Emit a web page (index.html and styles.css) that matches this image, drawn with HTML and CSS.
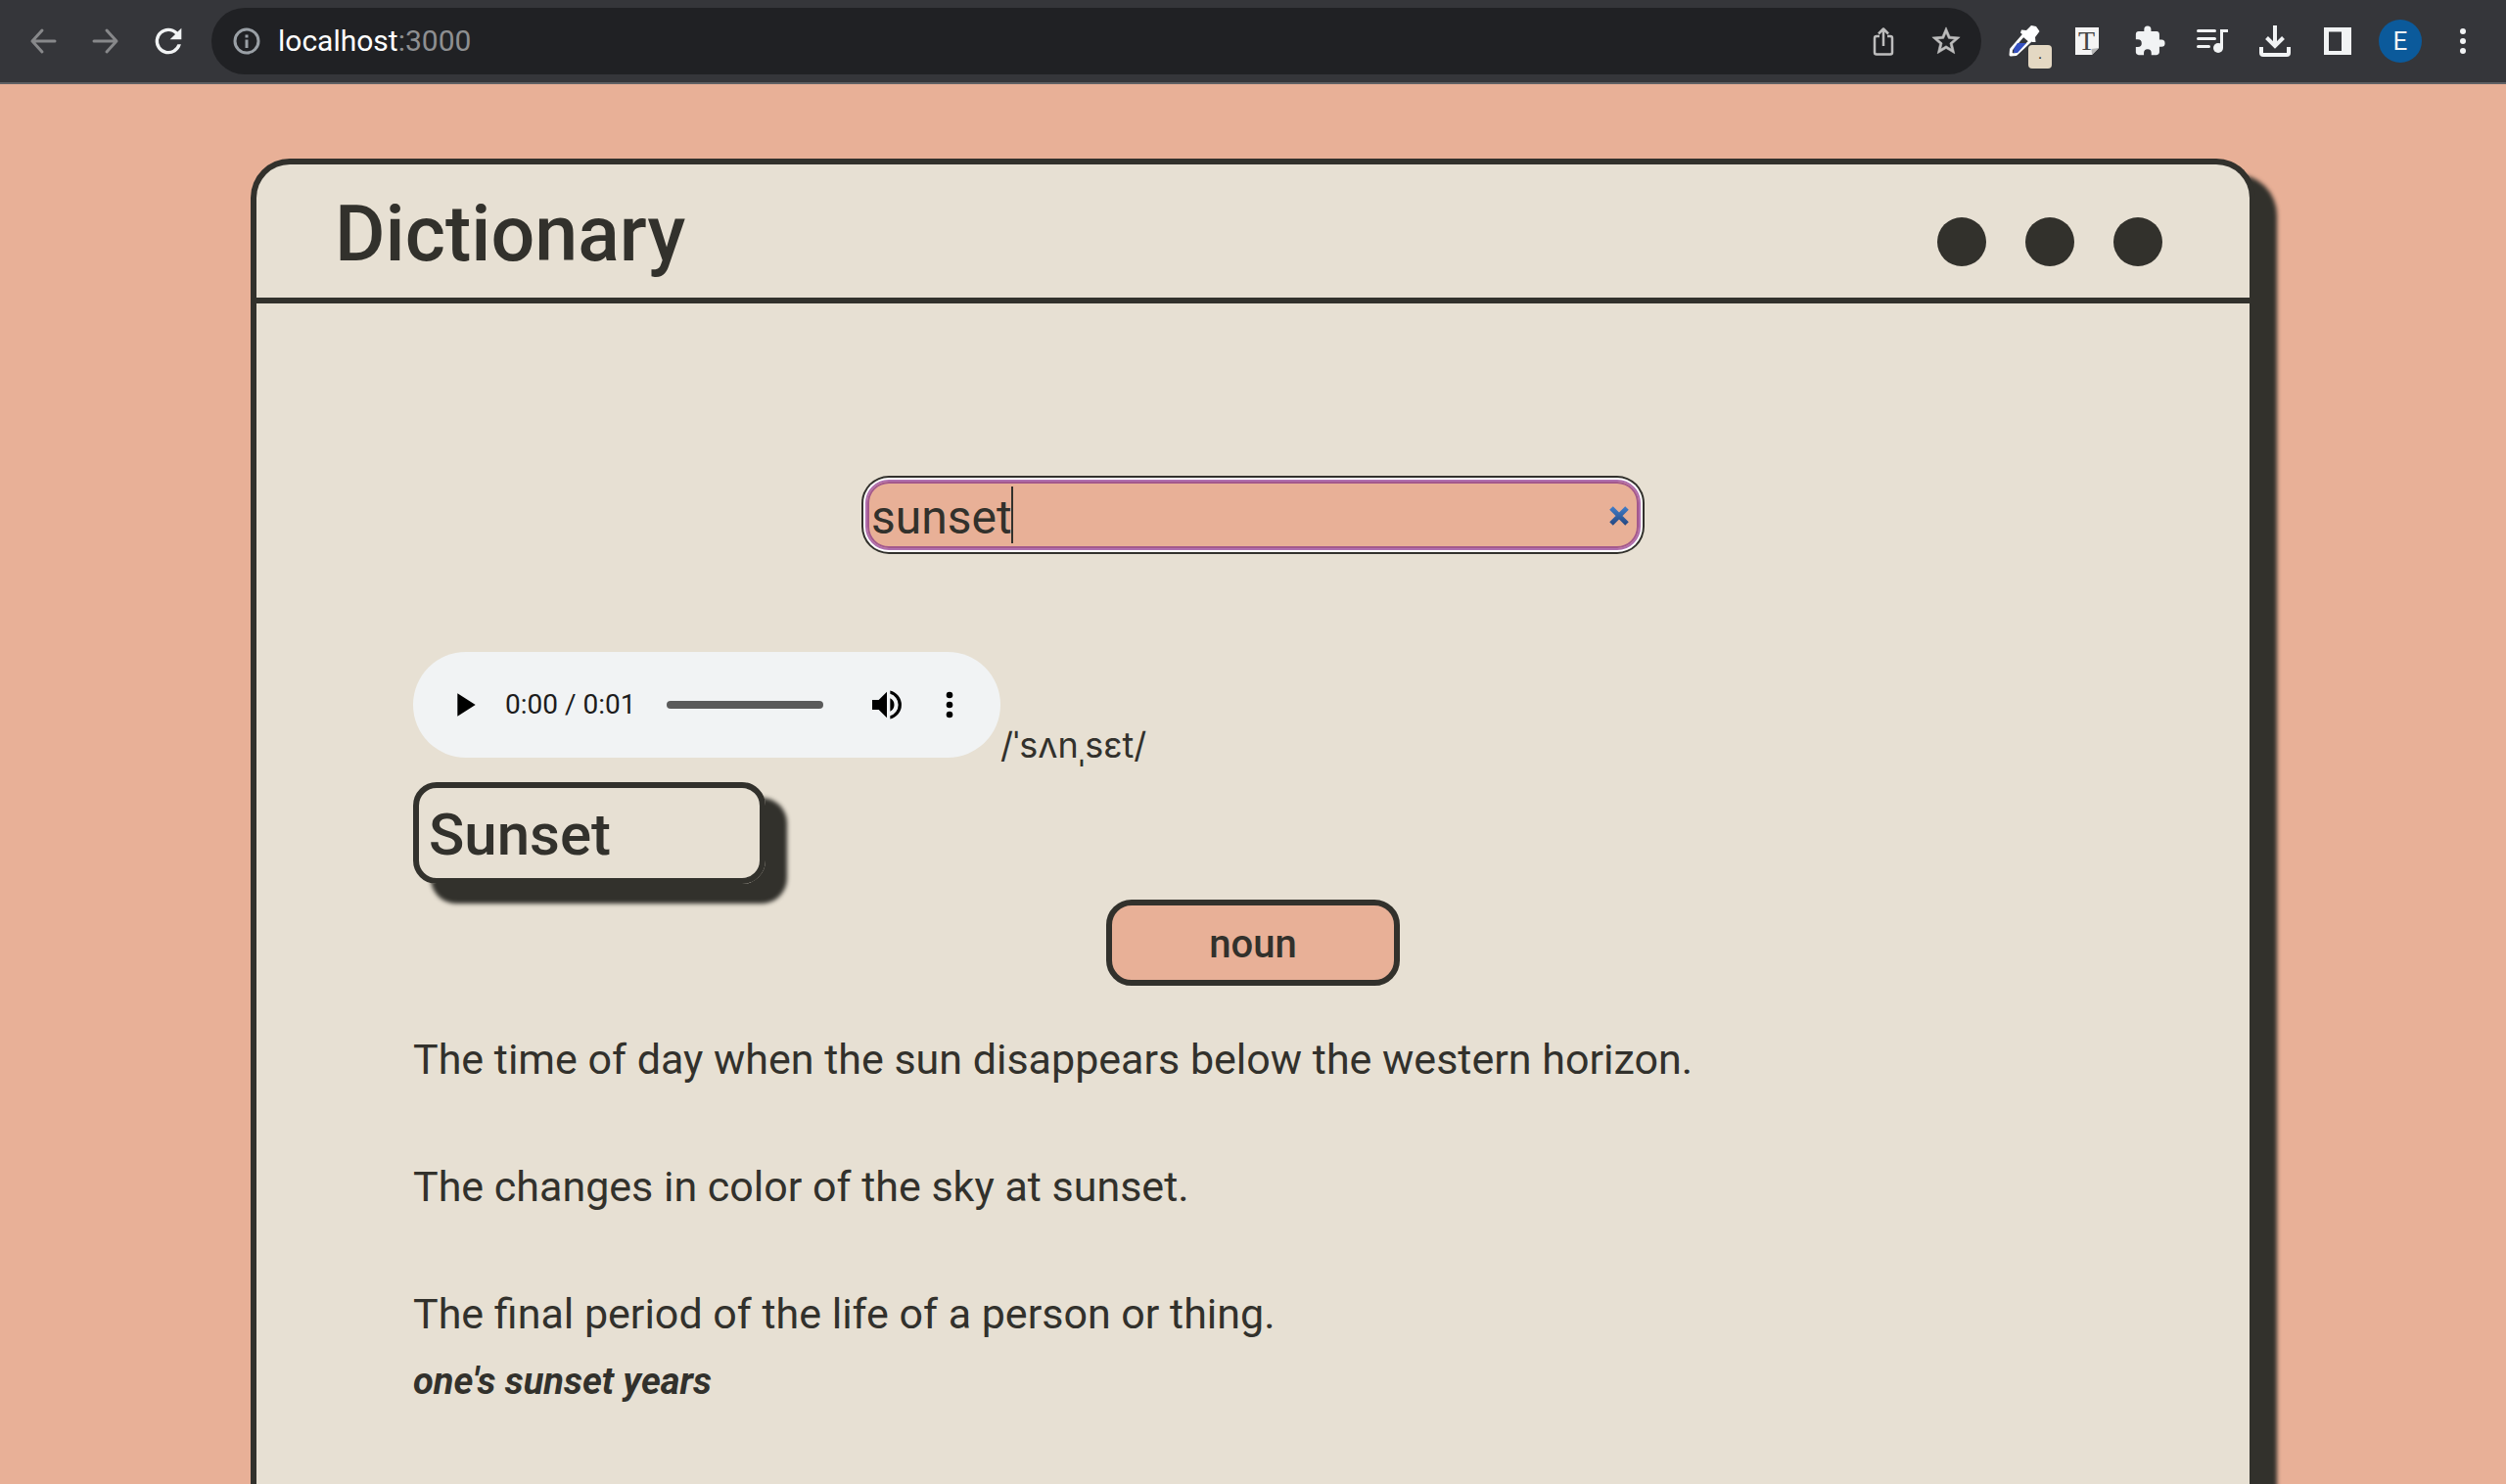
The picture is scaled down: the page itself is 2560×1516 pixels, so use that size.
FILE: index.html
```html
<!DOCTYPE html>
<html lang="en">
<head>
<meta charset="utf-8">
<meta name="viewport" content="width=device-width, initial-scale=1">
<title>Dictionary</title>
<link rel="stylesheet" href="styles.css">
</head>
<body>
<header class="toolbar">
  <nav class="toolbar-group" aria-label="Navigation">
    <button class="tool tool-muted" type="button" aria-label="Back">
      <svg class="icon" viewBox="0 0 40 40" fill="none" stroke="currentColor" stroke-width="3" stroke-linecap="round" stroke-linejoin="round"><path d="M32 20H9M19 9L9 20l10 11"/></svg>
    </button>
    <button class="tool tool-muted" type="button" aria-label="Forward">
      <svg class="icon" viewBox="0 0 40 40" fill="none" stroke="currentColor" stroke-width="3" stroke-linecap="round" stroke-linejoin="round"><path d="M8 20h23M21 9l10 11-10 11"/></svg>
    </button>
    <button class="tool" type="button" aria-label="Reload">
      <svg class="icon" viewBox="0 0 24 24" fill="currentColor"><path d="M17.65 6.35A7.95 7.95 0 0 0 12 4a8 8 0 1 0 7.73 10h-2.08A6 6 0 1 1 12 6c1.66 0 3.14.69 4.22 1.78L13 11h7V4l-2.35 2.35z"/></svg>
    </button>
  </nav>
  <div class="omnibox">
    <svg class="icon info" viewBox="0 0 40 40" fill="none" stroke="currentColor" stroke-width="3"><circle cx="20" cy="20" r="12"/><path d="M20 13.500v3M20 18.500v8.500"/></svg>
    <a class="url" href="#">localhost<span class="port">:3000</span></a>
    <button class="tool tool-soft" type="button" aria-label="Share">
      <svg class="icon" viewBox="0 0 40 40" fill="none" stroke="currentColor" stroke-width="2.500" stroke-linejoin="round"><path d="M16 15h-3a2 2 0 0 0-2 2v14.500a2 2 0 0 0 2 2h14a2 2 0 0 0 2-2V17a2 2 0 0 0-2-2h-3M20 25V8M15 12.500L20 7.500l5 5"/></svg>
    </button>
    <button class="tool tool-soft" type="button" aria-label="Bookmark">
      <svg class="icon icon-small" viewBox="0 0 24 24" fill="currentColor" stroke="currentColor" stroke-width=".4"><path d="M22 9.240l-7.190-.620L12 2 9.190 8.630 2 9.240l5.460 4.730L5.820 21 12 17.270 18.180 21l-1.630-7.030L22 9.240zM12 15.400l-3.760 2.270 1-4.280-3.320-2.880 4.380-.380L12 6.100l1.710 4.040 4.380.380-3.320 2.880 1 4.280L12 15.400z"/></svg>
    </button>
  </div>
  <div class="toolbar-group">
    <button class="tool" type="button" aria-label="Color picker">
      <svg class="icon" viewBox="0 0 40 40"><path d="M19 14L6.500 28.500 6 34l5.500-.500L26 20z" fill="#35363a" stroke="#fff" stroke-width="3" stroke-linejoin="round"/><path d="M13 22h9l-9 10H9l.5-5z" fill="#3550c0"/><path d="M17 8.500l5 .5 5-5 5 1 3.500 5-4.500 6 .5 5-3.500 0L16 11.500z" fill="#fff"/></svg>
      <span class="badge">.</span>
    </button>
    <button class="tool" type="button" aria-label="Type inspector">
      <svg class="icon" viewBox="0 0 40 40"><path d="M8 6h24v21l-7 7H8z" fill="#f4f4f4"/><path d="M32 27l-7 7-.5-6z" fill="#b5b5b5"/><text class="glyph" x="19.500" y="28.500" text-anchor="middle">T</text></svg>
    </button>
    <button class="tool" type="button" aria-label="Extensions">
      <svg class="icon icon-small" viewBox="0 0 24 24" fill="currentColor"><path d="M20.500 11H19V7c0-1.100-.9-2-2-2h-4V3.500a2.500 2.500 0 0 0-5 0V5H4c-1.100 0-1.990.9-1.990 2v3.800H3.500a2.700 2.700 0 0 1 0 5.400H2V20c0 1.100.9 2 2 2h3.800v-1.500a2.700 2.700 0 0 1 5.400 0V22H17c1.100 0 2-.9 2-2v-4h1.500a2.500 2.500 0 0 0 0-5z"/></svg>
    </button>
    <button class="tool" type="button" aria-label="Media controls">
      <svg class="icon" viewBox="0 0 40 40" fill="none" stroke="currentColor" stroke-width="3" stroke-linecap="round"><path d="M5.500 9.500h17M5.500 17.500h17M5.500 25.500h11"/><path d="M36 9.500h-6.500V27" stroke-linecap="butt"/><circle cx="26" cy="27" r="5" fill="currentColor" stroke="none"/></svg>
    </button>
    <button class="tool" type="button" aria-label="Downloads">
      <svg class="icon" viewBox="0 0 40 40" fill="none" stroke="currentColor" stroke-width="4"><path d="M20 4v21M11.500 16.500L20 25l8.500-8.500M6 26v6a2 2 0 0 0 2 2h24a2 2 0 0 0 2-2v-6"/></svg>
    </button>
    <button class="tool" type="button" aria-label="Side panel">
      <svg class="icon" viewBox="0 0 40 40" fill="currentColor" fill-rule="evenodd"><path d="M6 6h28v28H6zM11 10.500v19.500h13V10.500z"/></svg>
    </button>
    <button class="tool" type="button" aria-label="Profile"><span class="avatar">E</span></button>
    <button class="tool" type="button" aria-label="Menu">
      <svg class="icon" viewBox="0 0 40 40" fill="currentColor"><circle cx="20" cy="10" r="3"/><circle cx="20" cy="20" r="3"/><circle cx="20" cy="30" r="3"/></svg>
    </button>
  </div>
</header>

<div class="page">
  <div class="window">
    <header class="titlebar">
      <h1 class="title">Dictionary</h1>
      <div class="dots"><span class="dot"></span><span class="dot"></span><span class="dot"></span></div>
    </header>
    <main class="content">
      <form class="search">
        <input class="search-input" type="text" value="sunset" aria-label="Search for a word">
        <span class="caret"></span>
        <button class="clear" type="button" aria-label="Clear">
          <svg class="clear-icon" viewBox="0 0 24 24"><defs><linearGradient id="clear-blue" gradientUnits="userSpaceOnUse" x1="0" y1="2" x2="0" y2="22"><stop offset="0" stop-color="#427fcb"/><stop offset="1" stop-color="#24457f"/></linearGradient></defs><path d="M4 4l16 16M20 4L4 20" stroke="url(#clear-blue)" stroke-width="5" fill="none"/></svg>
        </button>
      </form>

      <div class="pronunciation">
        <div class="player">
          <button class="player-button" type="button" aria-label="Play"><svg class="icon" viewBox="0 0 24 24"><path d="M8 5v14l11-7z"/></svg></button>
          <span class="time">0:00 / 0:01</span>
          <input class="track" type="range" min="0" max="1" value="0" aria-label="Position">
          <button class="player-button" type="button" aria-label="Mute"><svg class="icon" viewBox="0 0 24 24"><path d="M3 9v6h4l5 5V4L7 9H3zm13.500 3A4.500 4.500 0 0 0 14 7.970v8.050A4.470 4.470 0 0 0 16.500 12zM14 3.230v2.060a7.010 7.010 0 0 1 0 13.420v2.060a9.010 9.010 0 0 0 0-17.540z"/></svg></button>
          <button class="player-button more" type="button" aria-label="More options"><svg class="icon" viewBox="0 0 24 24"><path d="M12 8a2 2 0 1 0 0-4 2 2 0 0 0 0 4zm0 2a2 2 0 1 0 0 4 2 2 0 0 0 0-4zm0 6a2 2 0 1 0 0 4 2 2 0 0 0 0-4z"/></svg></button>
        </div>
        <span class="phonetic">/ˈsʌnˌsɛt/</span>
      </div>

      <h2 class="word">Sunset</h2>
      <h3 class="part">noun</h3>

      <ul class="definitions">
        <li>The time of day when the sun disappears below the western horizon.</li>
        <li>The changes in color of the sky at sunset.</li>
        <li>The final period of the life of a person or thing.
          <p class="example">one's sunset years</p>
        </li>
      </ul>
    </main>
  </div>
</div>
</body>
</html>
```

FILE: styles.css
```css
:root {
  --ink: #32312c;
  --paper: #e7e0d3;
  --peach: #e8b097;
}

* { box-sizing: border-box; }

body {
  margin: 0;
  display: flex;
  flex-direction: column;
  min-height: 100vh;
  overflow-x: hidden;
  background: var(--peach);
  color: var(--ink);
  font-family: Roboto, "Liberation Sans", sans-serif;
}

button {
  padding: 0;
  border: 0;
  background: none;
  font: inherit;
  color: inherit;
}

svg { display: block; }

/* Browser toolbar */
.toolbar {
  display: flex;
  flex: none;
  align-items: center;
  gap: 12px;
  padding: 8px 12px;
  border-bottom: 2px solid #606164;
  background: #35363a;
  color: #f1f3f4;
}

.toolbar-group { display: flex; }

.tool {
  position: relative;
  display: flex;
  align-items: center;
  justify-content: center;
  width: 64px;
  height: 68px;
}

.tool-muted { color: #87888a; }
.tool-soft { color: #bdbdbd; }

.icon { width: 40px; height: 40px; }
.icon-small { width: 34px; height: 34px; }

.omnibox {
  display: flex;
  flex: 1;
  align-items: center;
  height: 68px;
  padding: 0 4px 0 16px;
  border-radius: 34px;
  background: #202124;
}

.info { color: #9aa0a6; }

.url {
  flex: 1;
  margin-left: 12px;
  color: #fff;
  font-size: 30px;
  line-height: 36px;
  text-decoration: none;
}

.port { color: #8e8f91; }

.badge {
  position: absolute;
  left: 36px;
  top: 38px;
  width: 24px;
  height: 24px;
  border-radius: 4px;
  background: #e4d8c3;
  color: #222;
  font-size: 16px;
  line-height: 18px;
  text-align: center;
}

.glyph {
  fill: #444;
  font-family: "Liberation Serif", serif;
  font-size: 28px;
}

.avatar {
  width: 44px;
  height: 44px;
  border-radius: 50%;
  background: #0b5a9b;
  font-size: 26px;
  line-height: 44px;
}

/* Dictionary window */
.page {
  display: flex;
  flex: 1;
  padding: 76px 10% 0;
}

.window {
  flex: 1;
  border: 6px solid var(--ink);
  border-bottom: 0;
  border-radius: 40px 40px 0 0;
  background: var(--paper);
  box-shadow: 20px 18px 4px 2px var(--ink);
}

.titlebar {
  display: flex;
  align-items: flex-end;
  justify-content: space-between;
  padding: 38px 89px 32px 80px;
  border-bottom: 6px solid var(--ink);
}

.title {
  margin: 0;
  font-size: 79px;
  line-height: 66px;
  font-weight: 500;
}

.dots { display: flex; gap: 40px; }

.dot {
  width: 50px;
  height: 50px;
  border-radius: 50%;
  background: var(--ink);
}

.content {
  display: flex;
  flex-direction: column;
  padding: 180px 160px 80px;
}

.search {
  position: relative;
  align-self: center;
  width: 792px;
  margin-bottom: 104px;
}

.search-input {
  display: block;
  width: 100%;
  height: 72px;
  padding: 4px 60px 0 4px;
  border: 2px solid #b06fae;
  border-radius: 24px;
  background: var(--peach);
  box-shadow: inset 0 0 0 2px #a3588c, 0 0 0 2px #fff, 0 0 0 4px var(--ink);
  color: var(--ink);
  font: 400 48px/56px Roboto, "Liberation Sans", sans-serif;
  outline: none;
}

.caret {
  position: absolute;
  left: 149px;
  top: 7px;
  width: 2px;
  height: 58px;
  background: var(--ink);
}

.clear {
  position: absolute;
  right: 10px;
  top: 25px;
}

.clear-icon { width: 24px; height: 24px; }

.pronunciation {
  display: flex;
  align-items: flex-end;
  margin-bottom: 16px;
}

.player {
  display: flex;
  align-items: center;
  width: 600px;
  height: 108px;
  margin-bottom: 9px;
  padding: 0 32px;
  border-radius: 54px;
  background: #f1f3f4;
}

.time {
  margin-left: 22px;
  color: #1c1c1c;
  font-size: 28px;
  line-height: 36px;
}

.track {
  appearance: none;
  width: 160px;
  height: 8px;
  margin: 0 45px 0 auto;
  border-radius: 4px;
  background: #5a5a5a;
}

.track::-webkit-slider-thumb {
  appearance: none;
  width: 0;
  height: 8px;
}

.more { margin-left: 24px; }

.phonetic {
  font-family: Inter, "Liberation Sans", sans-serif;
  font-size: 36px;
  line-height: 44px;
}

.word {
  width: 360px;
  margin: 0 0 16px;
  padding: 12px 10px 8px;
  border: 6px solid var(--ink);
  border-radius: 24px;
  box-shadow: 20px 18px 4px 2px var(--ink);
  font-size: 60px;
  line-height: 72px;
  font-weight: 500;
}

.part {
  align-self: center;
  width: 300px;
  margin: 0 0 50px;
  padding: 16px 14px 12px;
  border: 6px solid var(--ink);
  border-radius: 26px;
  background: var(--peach);
  font-size: 40px;
  line-height: 48px;
  font-weight: 500;
  text-align: center;
}

.definitions {
  display: flex;
  flex-direction: column;
  gap: 80px;
  margin: 0;
  padding: 0;
  list-style: none;
  font-size: 43px;
  line-height: 50px;
}

.example {
  margin: 24px 0 0;
  font-size: 38px;
  line-height: 40px;
  font-style: italic;
  font-weight: 700;
}
```
